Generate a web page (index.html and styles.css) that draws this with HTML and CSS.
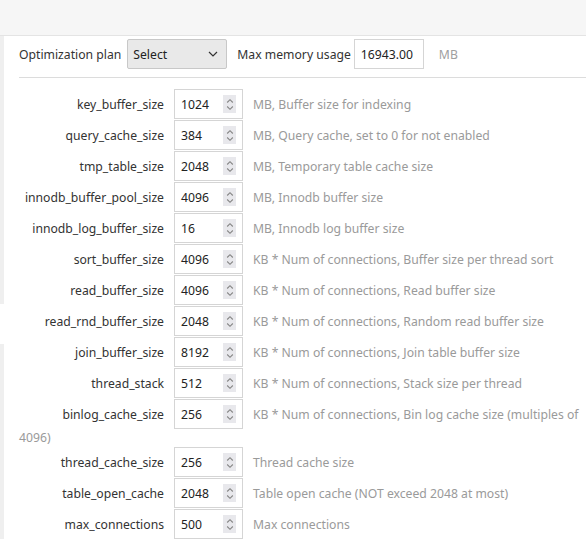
FILE: index.html
```html
<!DOCTYPE html>
<html>
<head>
<meta charset="utf-8">
<link rel="stylesheet" href="styles.css">
</head>
<body>
<div class="topbar"></div>
<div class="main">
  <div class="strip"><div class="seg seg-a"></div><div class="seg seg-gap"></div><div class="seg seg-b"></div></div>
  <div class="panel">
    <div class="head">
      <span class="head-label">Optimization plan</span>
      <span class="selectbox"><span class="select-text">Select</span><svg class="chev" width="10" height="6" viewBox="0 0 10 6"><path d="M1 1 L5 5 L9 1" fill="none" stroke="#333" stroke-width="1.2"/></svg></span>
      <span class="head-label head-label2">Max memory usage</span>
      <span class="membox">16943.00</span>
      <span class="unit">MB</span>
    </div>
    <div class="sep"></div>
    <div class="rows">
      <div class="row"><span class="lbl">key_buffer_size</span><span class="num"><span class="val">1024</span><span class="spin"><svg width="8" height="13" viewBox="0 0 8 13"><path d="M1.2 4.5 L4 1.7 L6.8 4.5 M1.2 8.5 L4 11.3 L6.8 8.5" fill="none" stroke="#858585" stroke-width="1.1"/></svg></span></span><span class="desc">MB, Buffer size for indexing</span></div>
      <div class="row"><span class="lbl">query_cache_size</span><span class="num"><span class="val">384</span><span class="spin"><svg width="8" height="13" viewBox="0 0 8 13"><path d="M1.2 4.5 L4 1.7 L6.8 4.5 M1.2 8.5 L4 11.3 L6.8 8.5" fill="none" stroke="#858585" stroke-width="1.1"/></svg></span></span><span class="desc">MB, Query cache, set to 0 for not enabled</span></div>
      <div class="row"><span class="lbl">tmp_table_size</span><span class="num"><span class="val">2048</span><span class="spin"><svg width="8" height="13" viewBox="0 0 8 13"><path d="M1.2 4.5 L4 1.7 L6.8 4.5 M1.2 8.5 L4 11.3 L6.8 8.5" fill="none" stroke="#858585" stroke-width="1.1"/></svg></span></span><span class="desc">MB, Temporary table cache size</span></div>
      <div class="row"><span class="lbl">innodb_buffer_pool_size</span><span class="num"><span class="val">4096</span><span class="spin"><svg width="8" height="13" viewBox="0 0 8 13"><path d="M1.2 4.5 L4 1.7 L6.8 4.5 M1.2 8.5 L4 11.3 L6.8 8.5" fill="none" stroke="#858585" stroke-width="1.1"/></svg></span></span><span class="desc">MB, Innodb buffer size</span></div>
      <div class="row"><span class="lbl">innodb_log_buffer_size</span><span class="num"><span class="val">16</span><span class="spin"><svg width="8" height="13" viewBox="0 0 8 13"><path d="M1.2 4.5 L4 1.7 L6.8 4.5 M1.2 8.5 L4 11.3 L6.8 8.5" fill="none" stroke="#858585" stroke-width="1.1"/></svg></span></span><span class="desc">MB, Innodb log buffer size</span></div>
      <div class="row"><span class="lbl">sort_buffer_size</span><span class="num"><span class="val">4096</span><span class="spin"><svg width="8" height="13" viewBox="0 0 8 13"><path d="M1.2 4.5 L4 1.7 L6.8 4.5 M1.2 8.5 L4 11.3 L6.8 8.5" fill="none" stroke="#858585" stroke-width="1.1"/></svg></span></span><span class="desc">KB * Num of connections, Buffer size per thread sort</span></div>
      <div class="row"><span class="lbl">read_buffer_size</span><span class="num"><span class="val">4096</span><span class="spin"><svg width="8" height="13" viewBox="0 0 8 13"><path d="M1.2 4.5 L4 1.7 L6.8 4.5 M1.2 8.5 L4 11.3 L6.8 8.5" fill="none" stroke="#858585" stroke-width="1.1"/></svg></span></span><span class="desc">KB * Num of connections, Read buffer size</span></div>
      <div class="row"><span class="lbl">read_rnd_buffer_size</span><span class="num"><span class="val">2048</span><span class="spin"><svg width="8" height="13" viewBox="0 0 8 13"><path d="M1.2 4.5 L4 1.7 L6.8 4.5 M1.2 8.5 L4 11.3 L6.8 8.5" fill="none" stroke="#858585" stroke-width="1.1"/></svg></span></span><span class="desc">KB * Num of connections, Random read buffer size</span></div>
      <div class="row"><span class="lbl">join_buffer_size</span><span class="num"><span class="val">8192</span><span class="spin"><svg width="8" height="13" viewBox="0 0 8 13"><path d="M1.2 4.5 L4 1.7 L6.8 4.5 M1.2 8.5 L4 11.3 L6.8 8.5" fill="none" stroke="#858585" stroke-width="1.1"/></svg></span></span><span class="desc">KB * Num of connections, Join table buffer size</span></div>
      <div class="row"><span class="lbl">thread_stack</span><span class="num"><span class="val">512</span><span class="spin"><svg width="8" height="13" viewBox="0 0 8 13"><path d="M1.2 4.5 L4 1.7 L6.8 4.5 M1.2 8.5 L4 11.3 L6.8 8.5" fill="none" stroke="#858585" stroke-width="1.1"/></svg></span></span><span class="desc">KB * Num of connections, Stack size per thread</span></div>
      <div class="row"><span class="lbl">binlog_cache_size</span><span class="num"><span class="val">256</span><span class="spin"><svg width="8" height="13" viewBox="0 0 8 13"><path d="M1.2 4.5 L4 1.7 L6.8 4.5 M1.2 8.5 L4 11.3 L6.8 8.5" fill="none" stroke="#858585" stroke-width="1.1"/></svg></span></span><span class="desc">KB * Num of connections, Bin log cache size (multiples of 4096)</span></div>
      <div class="row"><span class="lbl">thread_cache_size</span><span class="num"><span class="val">256</span><span class="spin"><svg width="8" height="13" viewBox="0 0 8 13"><path d="M1.2 4.5 L4 1.7 L6.8 4.5 M1.2 8.5 L4 11.3 L6.8 8.5" fill="none" stroke="#858585" stroke-width="1.1"/></svg></span></span><span class="desc">Thread cache size</span></div>
      <div class="row"><span class="lbl">table_open_cache</span><span class="num"><span class="val">2048</span><span class="spin"><svg width="8" height="13" viewBox="0 0 8 13"><path d="M1.2 4.5 L4 1.7 L6.8 4.5 M1.2 8.5 L4 11.3 L6.8 8.5" fill="none" stroke="#858585" stroke-width="1.1"/></svg></span></span><span class="desc">Table open cache (NOT exceed 2048 at most)</span></div>
      <div class="row"><span class="lbl">max_connections</span><span class="num"><span class="val">500</span><span class="spin"><svg width="8" height="13" viewBox="0 0 8 13"><path d="M1.2 4.5 L4 1.7 L6.8 4.5 M1.2 8.5 L4 11.3 L6.8 8.5" fill="none" stroke="#858585" stroke-width="1.1"/></svg></span></span><span class="desc">Max connections</span></div>
    </div>
  </div>
</div>
</body>
</html>
```
FILE: styles.css
```css
html, body {
  margin: 0;
  padding: 0;
  background: #fff;
  font-family: "Noto Sans", "Open Sans", sans-serif;
  font-size: 12.2px;
  color: #333;
}
.topbar {
  height: 35px;
  background: #f6f6f6;
  border-bottom: 1px solid #e4e4e4;
}
.main {
  display: flex;
  min-height: 503px;
}
.strip {
  width: 4px;
  display: flex;
  flex-direction: column;
}
.seg-a { height: 268px; background: #efefef; }
.seg-gap { height: 40px; background: #fff; }
.seg-b { flex: 1; background: #efefef; }
.panel {
  flex: 1;
  padding: 3px 0 0 15px;
}
.head {
  display: flex;
  align-items: center;
  height: 30px;
}
.head-label { margin-right: 6px; }
.head-label2 { margin-left: 10px; margin-right: 3px; }
.selectbox {
  display: inline-flex;
  align-items: center;
  justify-content: space-between;
  box-sizing: border-box;
  width: 100px;
  height: 30px;
  padding: 0 8px 0 5px;
  background: #e9e9e9;
  border: 1px solid #c8c8c8;
  border-radius: 2px;
  color: #222;
}
.membox {
  display: inline-flex;
  align-items: center;
  box-sizing: border-box;
  width: 70px;
  height: 30px;
  padding-left: 6px;
  border: 1px solid #d5d5d5;
  color: #222;
}
.unit {
  margin-left: 15px;
  color: #a0a0a0;
}
.sep {
  height: 1px;
  background: #dcdcdc;
  margin: 8px 0 11px;
}
.row {
  line-height: 17px;
  margin-bottom: 1px;
}
.lbl {
  display: inline-block;
  width: 145px;
  margin-right: 10px;
  text-align: right;
  color: #333;
}
.num {
  display: inline-flex;
  align-items: center;
  justify-content: space-between;
  box-sizing: border-box;
  width: 69px;
  height: 30px;
  padding: 0 6px 0 6px;
  border: 1px solid #d5d5d5;
  vertical-align: baseline;
  color: #222;
}
.spin {
  display: inline-flex;
  align-items: center;
  justify-content: center;
  width: 13px;
  height: 18px;
  background: #e8e8ec;
}
.spin svg { display: block; }
.desc {
  margin-left: 10px;
  color: #9a9a9a;
}
```
